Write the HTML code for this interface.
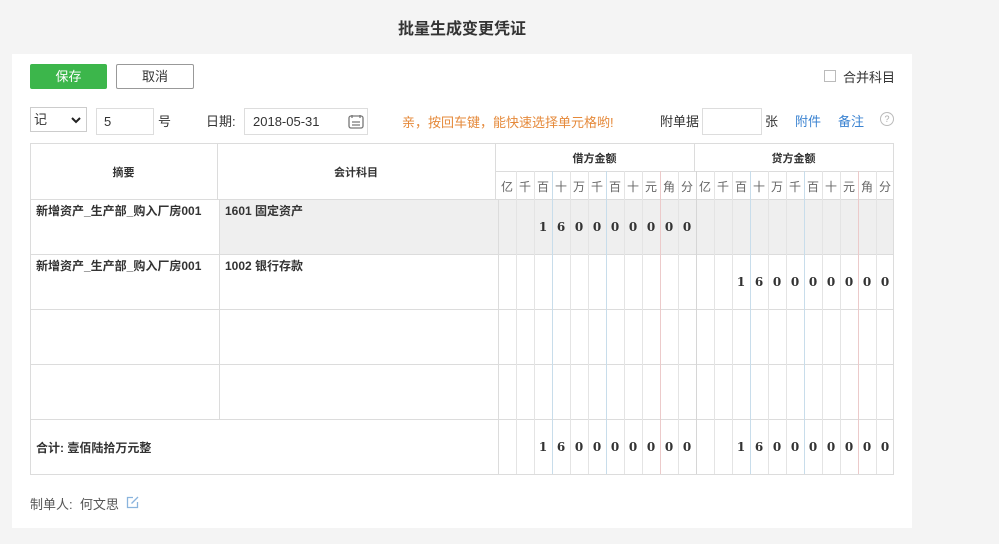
<!DOCTYPE html>
<html><head><meta charset="utf-8"><style>
*{margin:0;padding:0;box-sizing:border-box}
body{width:999px;height:544px;background:#f4f4f4;font-family:"Liberation Sans","Noto Sans CJK SC",sans-serif;font-size:12px;color:#333;position:relative;overflow:hidden}
.a{position:absolute}
.v{position:absolute;top:171px;height:303px;width:1px;background:#e4e4e4}
.vb{background:#c8ddeb}.vr{background:#eccaca}
.h{position:absolute;height:1px;background:#dcdcdc}
.d{position:absolute;width:18px;text-align:center;font-family:"DejaVu Serif","Liberation Serif",serif;font-weight:bold;font-size:12px;color:#333}
.u{position:absolute;top:178px;width:18px;text-align:center;font-size:12px;color:#666}
.b{font-weight:bold;font-size:12px}
</style></head><body>
<div class="a" style="left:0;top:15px;width:924px;text-align:center;font-size:16px;font-weight:bold;color:#333">批量生成变更凭证</div>
<div class="a" style="left:12px;top:54px;width:900px;height:474px;background:#fff"></div>
<div class="a" style="left:30px;top:64px;width:77px;height:25px;background:#3cb64b;border-radius:2px;color:#fff;text-align:center;line-height:25px;font-size:13px">保存</div>
<div class="a" style="left:116px;top:64px;width:78px;height:25px;border:1px solid #999;border-radius:2px;text-align:center;line-height:23px;font-size:13px">取消</div>
<div class="a" style="left:824px;top:70px;width:12px;height:12px;border:1px solid #bbb"></div>
<div class="a" style="left:843px;top:67px;font-size:13px">合并科目</div>
<div class="a" style="left:30px;top:107px;width:57px;height:25px;border:1px solid #ccc;line-height:23px;padding-left:3px;font-size:13px">记
<svg style="position:absolute;left:40px;top:8px" width="10" height="8" viewBox="0 0 10 8"><path d="M1 2l4 4 4-4" fill="none" stroke="#222" stroke-width="2"/></svg></div>
<div class="a" style="left:96px;top:108px;width:58px;height:27px;border:1px solid #ddd;line-height:25px;padding-left:7px;font-size:13px">5</div>
<div class="a" style="left:158px;top:111px;font-size:13px">号</div>
<div class="a" style="left:206px;top:111px;font-size:13px">日期:</div>
<div class="a" style="left:244px;top:108px;width:124px;height:27px;border:1px solid #ddd;line-height:25px;padding-left:8px;font-size:13px">2018-05-31
<svg style="position:absolute;left:103px;top:5px" width="16" height="15" viewBox="0 0 16 15"><rect x="1" y="2" width="14" height="12" rx="2" fill="none" stroke="#777" stroke-width="1.3"/><path d="M4 1v3M12 1v3M4 8h8M4 11h8" stroke="#777" stroke-width="1.3"/></svg></div>
<div class="a" style="left:402px;top:112px;color:#e5893a;font-size:13px">亲，按回车键，能快速选择单元格哟!</div>
<div class="a" style="left:660px;top:111px;font-size:13px">附单据</div>
<div class="a" style="left:702px;top:108px;width:60px;height:27px;border:1px solid #ddd"></div>
<div class="a" style="left:765px;top:111px;font-size:13px">张</div>
<div class="a" style="left:795px;top:111px;font-size:13px;color:#3b83d1">附件</div>
<div class="a" style="left:838px;top:111px;font-size:13px;color:#3b83d1">备注</div>
<div class="a" style="left:880px;top:112px;width:14px;height:14px;border:1px solid #bbb;border-radius:50%;font-size:9px;color:#aaa;text-align:center;line-height:12px">?</div>

<div class="a" style="left:30px;top:143px;width:864px;height:332px;border:1px solid #dcdcdc"></div>
<div class="a" style="left:219px;top:200px;width:674px;height:54px;background:#efefef"></div>
<div class="h" style="left:495px;top:171px;width:398px"></div>
<div class="h" style="left:30px;top:199px;width:864px"></div>
<div class="h" style="left:30px;top:254px;width:864px"></div>
<div class="h" style="left:30px;top:309px;width:864px"></div>
<div class="h" style="left:30px;top:364px;width:864px"></div>
<div class="h" style="left:30px;top:419px;width:864px"></div>
<div class="a" style="left:217px;top:143px;width:1px;height:56px;background:#dcdcdc"></div>
<div class="a" style="left:219px;top:199px;width:1px;height:220px;background:#dcdcdc"></div>
<div class="a" style="left:495px;top:143px;width:1px;height:56px;background:#dcdcdc"></div>
<div class="a" style="left:498px;top:199px;width:1px;height:275px;background:#dcdcdc"></div>
<div class="a" style="left:694px;top:143px;width:1px;height:28px;background:#dcdcdc"></div>

<div class="v" style="left:516px"></div><div class="v" style="left:534px"></div><div class="v vb" style="left:552px"></div>
<div class="v" style="left:570px"></div><div class="v" style="left:588px"></div><div class="v vb" style="left:606px"></div>
<div class="v" style="left:624px"></div><div class="v" style="left:642px"></div><div class="v vr" style="left:660px"></div>
<div class="v" style="left:678px"></div><div class="v" style="left:696px;background:#d6d6d6"></div>
<div class="v" style="left:714px"></div><div class="v" style="left:732px"></div><div class="v vb" style="left:750px"></div>
<div class="v" style="left:768px"></div><div class="v" style="left:786px"></div><div class="v vb" style="left:804px"></div>
<div class="v" style="left:822px"></div><div class="v" style="left:840px"></div><div class="v vr" style="left:858px"></div>
<div class="v" style="left:876px"></div>

<div class="a b" style="left:30px;top:164px;width:187px;text-align:center;font-size:11px">摘要</div>
<div class="a b" style="left:217px;top:164px;width:278px;text-align:center;font-size:11px">会计科目</div>
<div class="a b" style="left:495px;top:150px;width:199px;text-align:center;font-size:11px">借方金额</div>
<div class="a b" style="left:694px;top:150px;width:199px;text-align:center;font-size:11px">贷方金额</div>

<div class="u" style="left:498px">亿</div><div class="u" style="left:516px">千</div><div class="u" style="left:534px">百</div><div class="u" style="left:552px">十</div><div class="u" style="left:570px">万</div><div class="u" style="left:588px">千</div><div class="u" style="left:606px">百</div><div class="u" style="left:624px">十</div><div class="u" style="left:642px">元</div><div class="u" style="left:660px">角</div><div class="u" style="left:678px">分</div>
<div class="u" style="left:696px">亿</div><div class="u" style="left:714px">千</div><div class="u" style="left:732px">百</div><div class="u" style="left:750px">十</div><div class="u" style="left:768px">万</div><div class="u" style="left:786px">千</div><div class="u" style="left:804px">百</div><div class="u" style="left:822px">十</div><div class="u" style="left:840px">元</div><div class="u" style="left:858px">角</div><div class="u" style="left:876px">分</div>

<div class="a b" style="left:36px;top:202px">新增资产_生产部_购入厂房001</div>
<div class="a b" style="left:225px;top:202px">1601 固定资产</div>
<div class="a b" style="left:36px;top:257px">新增资产_生产部_购入厂房001</div>
<div class="a b" style="left:225px;top:257px">1002 银行存款</div>
<div class="a b" style="left:36px;top:439px">合计: 壹佰陆拾万元整</div>

<div class="d" style="top:220px;left:534px">1</div><div class="d" style="top:220px;left:552px">6</div><div class="d" style="top:220px;left:570px">0</div><div class="d" style="top:220px;left:588px">0</div><div class="d" style="top:220px;left:606px">0</div><div class="d" style="top:220px;left:624px">0</div><div class="d" style="top:220px;left:642px">0</div><div class="d" style="top:220px;left:660px">0</div><div class="d" style="top:220px;left:678px">0</div>
<div class="d" style="top:275px;left:732px">1</div><div class="d" style="top:275px;left:750px">6</div><div class="d" style="top:275px;left:768px">0</div><div class="d" style="top:275px;left:786px">0</div><div class="d" style="top:275px;left:804px">0</div><div class="d" style="top:275px;left:822px">0</div><div class="d" style="top:275px;left:840px">0</div><div class="d" style="top:275px;left:858px">0</div><div class="d" style="top:275px;left:876px">0</div>
<div class="d" style="top:440px;left:534px">1</div><div class="d" style="top:440px;left:552px">6</div><div class="d" style="top:440px;left:570px">0</div><div class="d" style="top:440px;left:588px">0</div><div class="d" style="top:440px;left:606px">0</div><div class="d" style="top:440px;left:624px">0</div><div class="d" style="top:440px;left:642px">0</div><div class="d" style="top:440px;left:660px">0</div><div class="d" style="top:440px;left:678px">0</div>
<div class="d" style="top:440px;left:732px">1</div><div class="d" style="top:440px;left:750px">6</div><div class="d" style="top:440px;left:768px">0</div><div class="d" style="top:440px;left:786px">0</div><div class="d" style="top:440px;left:804px">0</div><div class="d" style="top:440px;left:822px">0</div><div class="d" style="top:440px;left:840px">0</div><div class="d" style="top:440px;left:858px">0</div><div class="d" style="top:440px;left:876px">0</div>

<div class="a" style="left:30px;top:494px;font-size:13px;color:#555">制单人:&nbsp; 何文思</div>
<svg class="a" style="left:126px;top:496px" width="13" height="13" viewBox="0 0 13 13"><path d="M7 1.5H1.5v10h10V6" fill="none" stroke="#8ab4dd" stroke-width="1.3"/><path d="M5.5 7.5L12 1" stroke="#8ab4dd" stroke-width="1.3"/></svg>
</body></html>
